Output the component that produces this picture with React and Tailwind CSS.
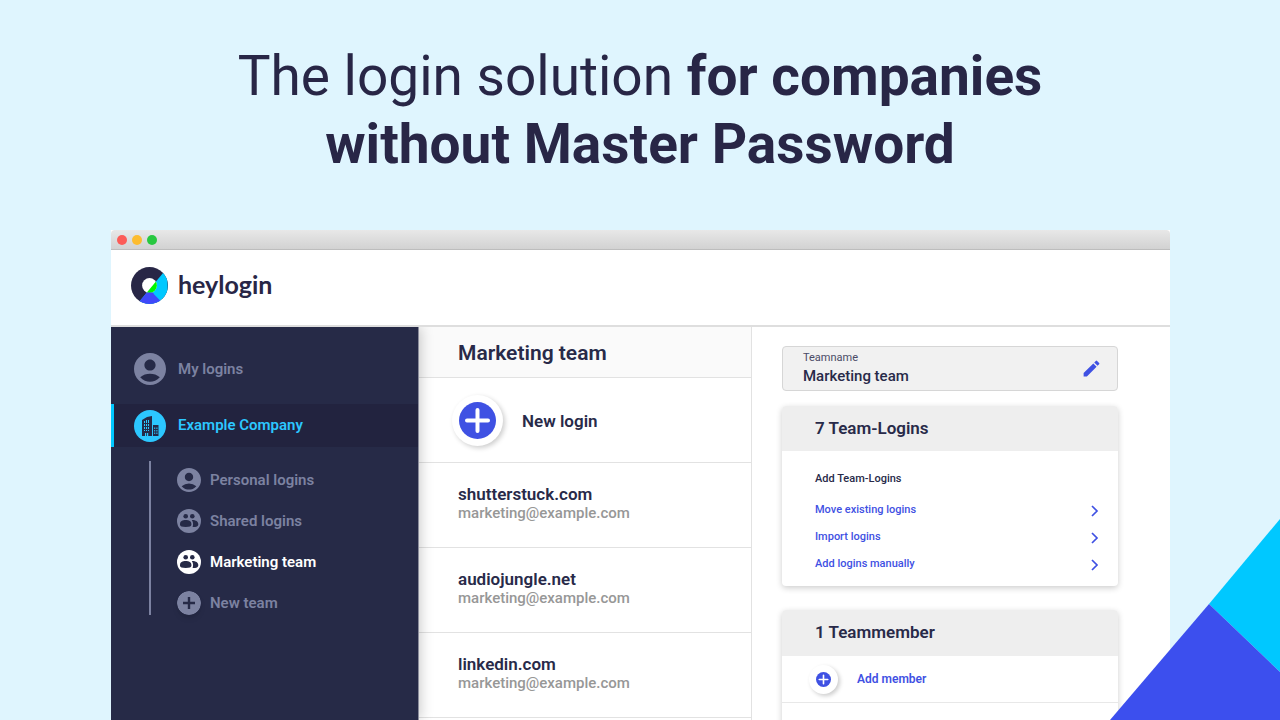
import { MdAccountCircle, MdAddCircle } from "react-icons/md";

function HeyloginMark() {
  return (
    <svg viewBox="0 0 37 37" className="size-[37px]" aria-hidden="true">
      <defs>
        <clipPath id="mark-outer"><circle cx="18.5" cy="18.5" r="18.5" /></clipPath>
        <clipPath id="mark-inner"><circle cx="18.5" cy="18.5" r="7.4" /></clipPath>
      </defs>
      <g clipPath="url(#mark-outer)">
        <rect width="37" height="37" fill="#282646" />
        <path d="M36.2 1 L37 37 H6.3 Z" fill="#00c8ff" />
        <path d="M6.3 37 L15.8 25.5 H21.3 L32.5 37 Z" fill="#4048fa" />
      </g>
      <g clipPath="url(#mark-inner)">
        <rect width="37" height="37" fill="#fff" />
        <path d="M36.2 1 L37 37 H6.3 Z" fill="#00f700" />
      </g>
      <path d="M14.5 27 L15.8 25.5 H21.3 L23 27 Z" fill="#4048fa" />
    </svg>
  );
}

function CompanyIcon() {
  return (
    <svg viewBox="0 0 32 32" className="size-8 shrink-0" aria-hidden="true">
      <circle cx="16" cy="16" r="16" fill="#2cc7ff" />
      <path d="M8 26 V10 L13 7 L18 6 V26 Z M19 15 H24.5 V26 H19 Z" fill="#252a47" />
      <g fill="#2cc7ff">
        <path d="M10 11h1v2h-1zM12 10h1v3h-1zM14 10h1v3h-1zM10 14h1v2h-1zM12 14h1v2h-1zM14 14h1v2h-1zM10 17h1v2h-1zM12 17h1v2h-1zM14 17h1v2h-1zM10 20h1v1h-1zM12 20h1v1h-1zM14 20h1v1h-1z" />
        <path d="M11 23h1.2v3H11zM13 23h1.2v3H13zM20.2 17.500h1v1.4h-1zM22.4 17.500h1v1.4h-1zM20.2 20h1v1.4h-1zM22.4 20h1v1.4h-1zM20.2 22.500h1v1.4h-1zM22.4 22.500h1v1.4h-1z" />
      </g>
    </svg>
  );
}

function PersonIcon({ className }) {
  return <MdAccountCircle viewBox="2 2 20 20" className={className} aria-hidden="true" />;
}

function TeamIcon() {
  return (
    <svg viewBox="0 0 24 24" className="size-6 shrink-0" aria-hidden="true">
      <circle cx="12" cy="12" r="12" fill="currentColor" />
      <g fill="#262a47">
        <circle cx="8.7" cy="7.3" r="2.3" />
        <circle cx="15.3" cy="7.3" r="2.3" />
        <path d="M3 15 C3 12 5.500 11 8.7 11 S14.4 12 14.4 15 V15.8 C14.4 17.6 12.400 18 8.7 18 S3 17.600 3 15.8 Z" />
        <path d="M14.8 11 C18.8 10.900 21.3 12.500 21.3 15.2 C21.3 17.200 19.600 18 15.600 18 C16.300 16 16.400 13 14.8 11 Z" />
      </g>
    </svg>
  );
}

function PlusIcon({ className }) {
  return (
    <svg viewBox="0 0 37 37" className={className} aria-hidden="true">
      <circle cx="18.5" cy="18.5" r="18.5" fill="#3f51e3" />
      <path d="M18.5 8 V29 M8 18.5 H29" stroke="#fff" strokeWidth="4" strokeLinecap="round" />
    </svg>
  );
}

function PencilIcon() {
  return (
    <svg viewBox="0 0 24 24" className="size-[21px]" fill="currentColor" aria-hidden="true">
      <path d="M3 17.25V21h3.75L17.81 9.94l-3.75-3.75L3 17.25zM20.71 7.04a1 1 0 0 0 0-1.41l-2.34-2.34a1 1 0 0 0-1.41 0l-1.83 1.83 3.75 3.75 1.83-1.83z" />
    </svg>
  );
}

const teams = [
  { name: "Personal logins", icon: <PersonIcon className="size-6 shrink-0" /> },
  { name: "Shared logins", icon: <TeamIcon /> },
  { name: "Marketing team", icon: <TeamIcon />, active: true },
  { name: "New team", icon: <MdAddCircle viewBox="2 2 20 20" className="size-6 shrink-0 rounded-full shadow-md" aria-hidden="true" /> },
];

function Sidebar() {
  return (
    <nav className="relative z-10 w-[308px] shrink-0 border-r border-[#8b8d9c] bg-[#262a47] text-[15px] font-semibold text-[#7c82a1] shadow-[2px_0_12px_rgba(0,0,0,0.2)]">
      <a href="#my" className="mt-[26px] flex h-8 items-center gap-3 pl-[23px]">
        <PersonIcon className="size-8 shrink-0" />
        My logins
      </a>
      <a href="#company" className="mt-[19px] flex h-[43px] items-center gap-3 border-l-[3px] border-[#00c8ff] bg-[#22233f] pl-5 text-[#2cc7ff]">
        <CompanyIcon />
        Example Company
      </a>
      <ul className="mt-[14px] ml-[38px] flex flex-col gap-[17px] border-l-2 border-[#7c82a1] pt-[7px] pl-[26px]">
        {teams.map((t) => (
          <li key={t.name}>
            <a href="#team" className={t.active ? "flex h-6 items-center gap-[9px] text-white" : "flex h-6 items-center gap-[9px]"}>
              {t.icon}
              {t.name}
            </a>
          </li>
        ))}
      </ul>
    </nav>
  );
}

const logins = ["shutterstuck.com", "audiojungle.net", "linkedin.com"];

function LoginList() {
  return (
    <section className="w-[333px] shrink-0 border-r border-[#e2e2e2]">
      <h2 className="flex h-[51px] items-center border-b border-[#e2e2e2] bg-[#fafafa] pt-[3px] pl-[39px] text-[21px] font-semibold">Marketing team</h2>
      <button type="button" className="flex h-[85px] w-full items-center gap-[19px] border-b border-[#e2e2e2] pl-[33px] text-[17px] font-semibold">
        <span className="flex size-[51px] items-center justify-center rounded-full bg-white shadow-[2px_2px_5px_rgba(0,0,0,0.2)]">
          <PlusIcon className="size-[37px]" />
        </span>
        <span className="pt-[3px]">New login</span>
      </button>
      <ul>
        {logins.map((site) => (
          <li key={site} className="flex h-[85px] flex-col justify-center border-b border-[#e2e2e2] pb-1 pl-[39px]">
            <p className="text-[17px] leading-5 font-semibold">{site}</p>
            <p className="text-[15px] leading-[18px] font-medium text-[#979797]">marketing@example.com</p>
          </li>
        ))}
      </ul>
    </section>
  );
}

const actions = ["Move existing logins", "Import logins", "Add logins manually"];

function Details() {
  return (
    <section className="min-w-0 grow pt-[19px] pr-[52px] pl-[30px]">
      <div className="flex h-[45px] items-center justify-between rounded border border-[#d6d6d6] bg-[#f1f1f1] pr-[15px] pl-5">
        <div>
          <label htmlFor="teamname" className="block text-[11px] leading-4 text-[#4a4b66]">Teamname</label>
          <input id="teamname" defaultValue="Marketing team" className="block h-[22px] w-full text-[15px] font-medium outline-none" />
        </div>
        <button type="button" aria-label="Edit team name" className="text-[#3f51e3]">
          <PencilIcon />
        </button>
      </div>

      <div className="mt-[15px] overflow-hidden rounded bg-white shadow-[0_2px_6px_rgba(0,0,0,0.2)]">
        <h3 className="flex h-[45px] items-center bg-[#eeeeee] pl-[33px] text-[17px] font-semibold">7 Team-Logins</h3>
        <div className="pt-5 pr-[17px] pb-2 pl-[33px] text-[11px] font-medium">
          <p className="mb-[10px] leading-4">Add Team-Logins</p>
          {actions.map((a) => (
            <a key={a} href="#action" className="flex h-[27px] items-center justify-between text-[#3f51e3]">
              {a}
              <svg viewBox="0 0 14 14" className="size-[14px]" aria-hidden="true">
                <path d="M5 2 L10 7 L5 12" fill="none" stroke="currentColor" strokeWidth="1.7" />
              </svg>
            </a>
          ))}
        </div>
      </div>

      <div className="mt-6 overflow-hidden rounded bg-white shadow-[0_2px_6px_rgba(0,0,0,0.2)]">
        <h3 className="flex h-[46px] items-center bg-[#eeeeee] pl-[33px] text-[17px] font-semibold">1 Teammember</h3>
        <button type="button" className="flex h-[47px] w-full items-center gap-[19px] border-b border-[#e8e8e8] pl-[27px] text-[12px] font-semibold text-[#3f51e3]">
          <span className="flex size-[29px] items-center justify-center rounded-full bg-white shadow-[2px_2px_4px_rgba(0,0,0,0.2)]">
            <PlusIcon className="size-[15px]" />
          </span>
          Add member
        </button>
        <div className="h-12" />
      </div>
    </section>
  );
}

export default function App() {
  return (
    <main className="relative flex h-screen flex-col overflow-hidden bg-[#dff5fe] font-[Roboto,sans-serif] text-[#282a49]">
      <h1 className="shrink-0 pt-[42px] text-center text-[55px] leading-[68px] font-normal text-[#282646]">
        The login solution <strong className="font-bold">for companies<br />without Master Password</strong>
      </h1>
      <div className="mt-[52px] mr-[110px] ml-[111px] flex min-h-0 grow flex-col overflow-hidden bg-white">
        <div className="flex h-5 shrink-0 items-center gap-[5px] rounded-t border-b border-[#bdbdbd] bg-linear-to-b from-[#e8e8e8] to-[#d2d2d2] pl-[6px]">
          <span className="size-[10px] rounded-full bg-[#fc5b57]" />
          <span className="size-[10px] rounded-full bg-[#fdbc2f]" />
          <span className="size-[10px] rounded-full bg-[#28c840]" />
        </div>
        <header className="flex h-[77px] shrink-0 items-center gap-[10px] border-b-2 border-[#dedede] pb-1 pl-5">
          <HeyloginMark />
          <span className="pb-1 font-[Lato,sans-serif] text-[25px] leading-7 font-bold text-[#282646]">heylogin</span>
        </header>
        <div className="flex min-h-0 grow overflow-hidden">
          <Sidebar />
          <LoginList />
          <Details />
        </div>
      </div>
      <svg viewBox="0 0 170 201" className="absolute right-0 bottom-0 z-20 h-[201px] w-[170px]" aria-hidden="true">
        <path d="M99 85 L170 0 V153 Z" fill="#00c8ff" />
        <path d="M99 85 L170 153 V201 H0 Z" fill="#3c4fee" />
      </svg>
    </main>
  );
}
